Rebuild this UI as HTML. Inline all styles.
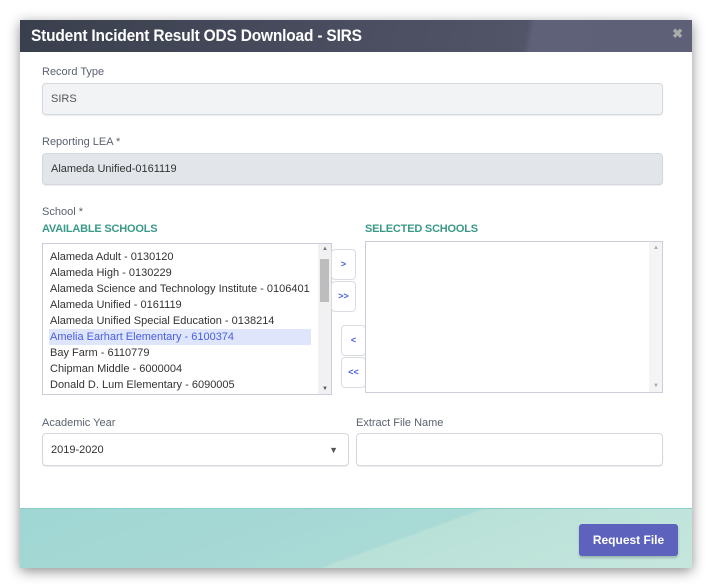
<!DOCTYPE html>
<html><head><meta charset="utf-8"><style>
*{box-sizing:border-box;margin:0;padding:0}
body{width:712px;height:588px;background:#fff;font-family:"Liberation Sans",sans-serif;position:relative;overflow:hidden}
.modal{position:absolute;left:20px;top:20px;width:672px;height:548px;background:#fff;box-shadow:0 3px 12px rgba(0,0,0,.45);overflow:hidden}
.hdr{height:32px;background:linear-gradient(100deg,#3a3f4d 0%,#4a4e60 50%,#525468 75%,#5f6178 76%,#5e6077 100%);color:#fff;font-size:17px;font-weight:bold;padding:6px 0 0 11px;letter-spacing:-.2px}
.hdr span{display:inline-block;transform:scaleX(.91);transform-origin:0 0}
.x{position:absolute;right:9px;top:6px;color:#aaa;font-size:13px;font-weight:bold}
.a{position:absolute}
.lbl{font-size:11px;color:#5a6270}
.inp{border:1px solid #d3d8de;border-radius:4px;font-size:11px;color:#333;padding-left:8px;display:flex;align-items:center;box-shadow:0 1px 1px rgba(0,0,0,.08)}
.hd{font-size:11px;font-weight:bold;color:#3a9988;letter-spacing:-.2px}
.list{border:1px solid #ccd;font-size:11px;color:#333;background:#fff}
.it{height:16px;line-height:16px;padding-left:7px;white-space:nowrap;overflow:hidden}
.btn{position:absolute;width:25px;height:31px;border:1px solid #d8dce2;border-radius:4px;background:#fff;color:#4a5ee0;font-size:9px;font-weight:bold;text-align:center;line-height:29px}
.ftr{position:absolute;left:0;top:488px;width:672px;height:60px;background:linear-gradient(160deg,#9fd6d3 0%,#a9dad6 55%,#b9e1d8 56%,#c5e6dd 100%);border-top:1px solid #8ecfcb}
.rq{position:absolute;left:559px;top:15px;width:99px;height:32px;background:#5d63bd;border-radius:3px;color:#fff;font-size:12px;font-weight:bold;text-align:center;line-height:32px;box-shadow:0 2px 2px rgba(0,0,0,.2)}
</style></head><body>
<div class="modal">
<div class="hdr"><span>Student Incident Result ODS Download - SIRS</span></div><div class="x">✖</div>
<div class="a lbl" style="left:22px;top:46px">Record Type</div>
<div class="a inp" style="left:22px;top:63px;width:621px;height:32px;background:#f2f3f5;color:#555">SIRS</div>
<div class="a lbl" style="left:22px;top:116px">Reporting LEA *</div>
<div class="a inp" style="left:22px;top:133px;width:621px;height:32px;background:#e2e5e9">Alameda Unified-0161119</div>
<div class="a lbl" style="left:22px;top:186px">School *</div>
<div class="a hd" style="left:22px;top:203px">AVAILABLE SCHOOLS</div>
<div class="a hd" style="left:345px;top:203px">SELECTED SCHOOLS</div>
<div class="a list" style="left:22px;top:223px;width:290px;height:152px;padding-top:5px">
<div class="it">Alameda Adult - 0130120</div>
<div class="it">Alameda High - 0130229</div>
<div class="it" style="width:275px">Alameda Science and Technology Institute - 0106401</div>
<div class="it">Alameda Unified - 0161119</div>
<div class="it">Alameda Unified Special Education - 0138214</div>
<div class="it" style="background:#dfe5fb;color:#4a5ee0;width:262px;margin-left:6px;padding-left:1px">Amelia Earhart Elementary - 6100374</div>
<div class="it">Bay Farm - 6110779</div>
<div class="it">Chipman Middle - 6000004</div>
<div class="it">Donald D. Lum Elementary - 6090005</div>
<div class="a" style="right:0;top:0;width:13px;height:150px;background:#f1f1f1"></div>
<div class="a" style="right:2px;top:15px;width:9px;height:43px;background:#bdbdbd"></div>
<div class="a" style="right:3px;top:2px;font-size:6px;color:#777">▲</div>
<div class="a" style="right:3px;bottom:2px;font-size:6px;color:#555">▼</div>
</div>
<div class="btn" style="left:311px;top:229px">&gt;</div>
<div class="btn" style="left:311px;top:261px">&gt;&gt;</div>
<div class="btn" style="left:321px;top:305px">&lt;</div>
<div class="btn" style="left:321px;top:337px">&lt;&lt;</div>
<div class="a list" style="left:345px;top:221px;width:298px;height:152px">
<div class="a" style="right:0;top:0;width:13px;height:150px;background:#f4f4f4"></div>
<div class="a" style="right:3px;top:3px;font-size:6px;color:#aaa">▲</div>
<div class="a" style="right:3px;bottom:3px;font-size:6px;color:#aaa">▼</div>
</div>
<div class="a lbl" style="left:22px;top:397px">Academic Year</div>
<div class="a lbl" style="left:336px;top:397px">Extract File Name</div>
<div class="a inp" style="left:22px;top:413px;width:307px;height:33px;background:#fff">2019-2020<span style="position:absolute;right:10px;font-size:9px;color:#555">▼</span></div>
<div class="a inp" style="left:336px;top:413px;width:307px;height:33px;background:#fff"></div>
<div class="ftr"><div class="rq">Request File</div></div>
</div>
</body></html>
